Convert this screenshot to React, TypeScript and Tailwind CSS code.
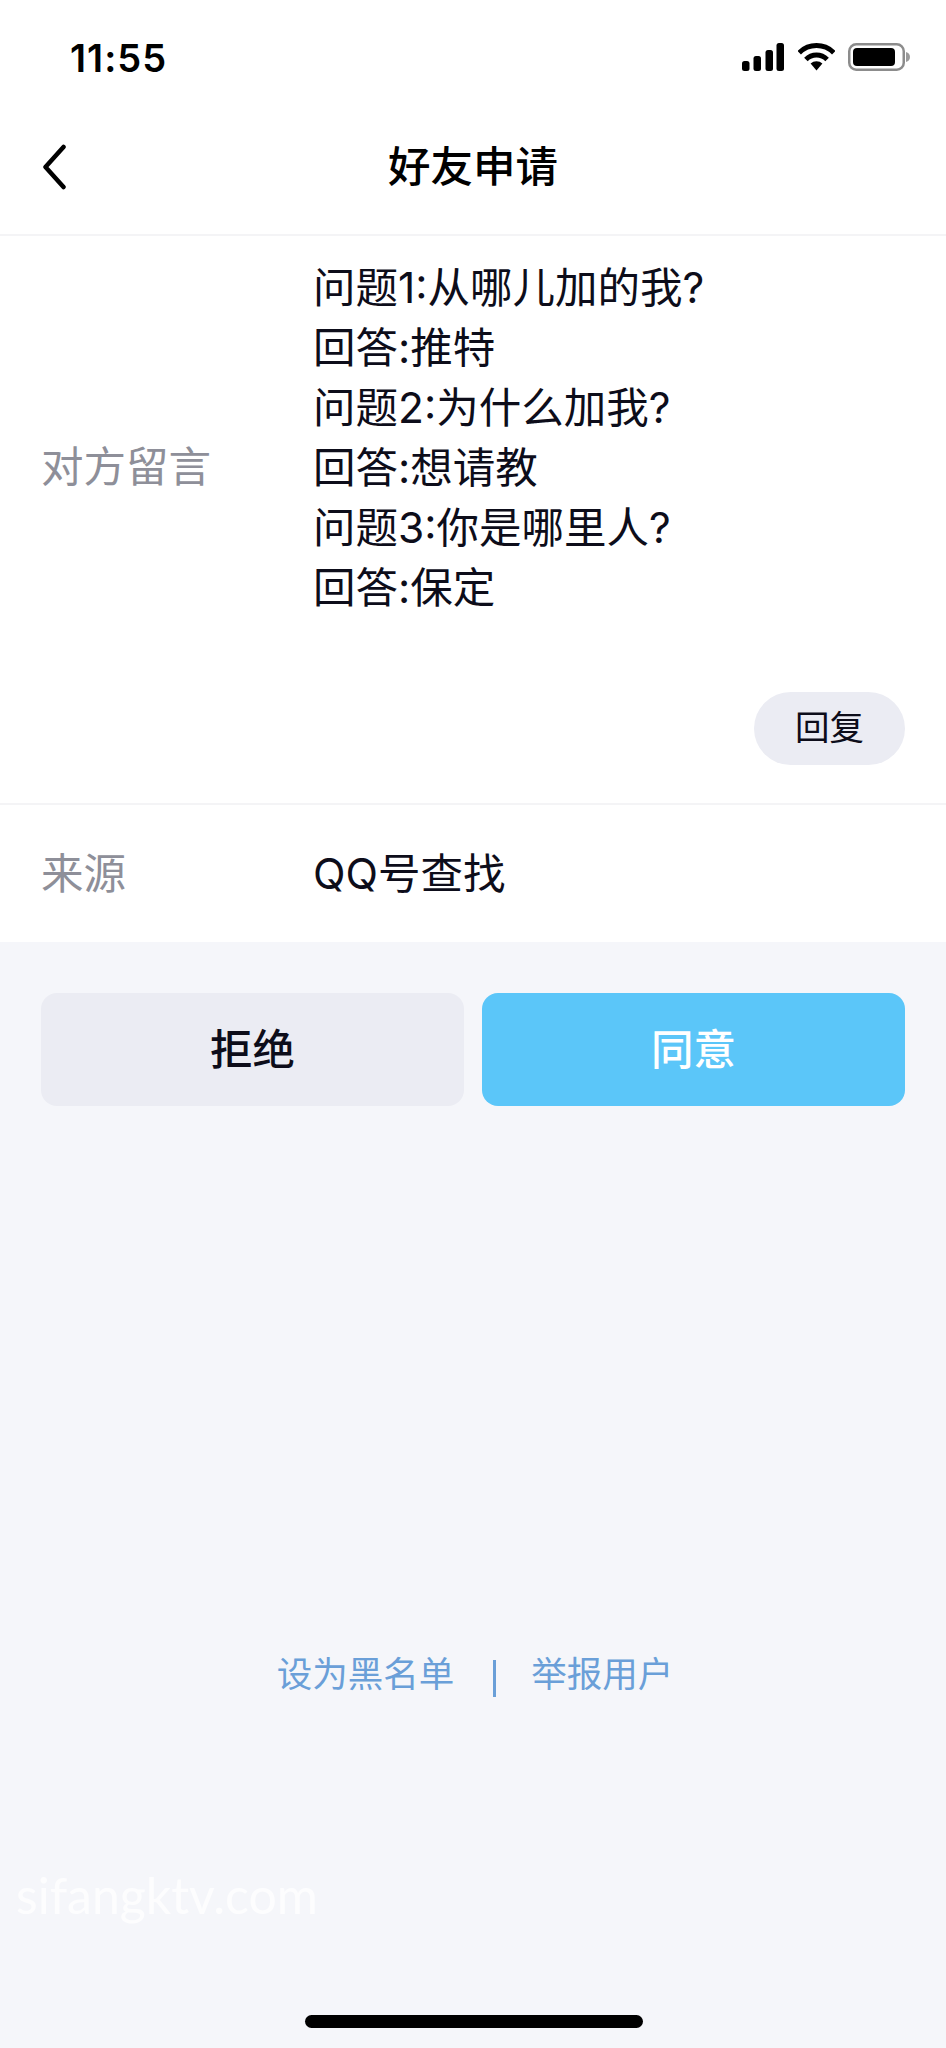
const FONT = "font-['Inter','Noto_Sans_CJK_SC',sans-serif]";

const messageLines = [
  "问题1:从哪儿加的我?",
  "回答:推特",
  "问题2:为什么加我?",
  "回答:想请教",
  "问题3:你是哪里人?",
  "回答:保定",
];

const StatusIcons = (): JSX.Element => (
  <div className="flex items-center">
    {/* 信号 */}
    <svg width="42" height="28" viewBox="0 0 42 28" fill="#000">
      <rect x="0" y="18" width="7.5" height="10" rx="2.5" />
      <rect x="11.5" y="13" width="7.5" height="15" rx="2.5" />
      <rect x="23.5" y="7" width="7.5" height="21" rx="2.5" />
      <rect x="34.5" y="0" width="7.5" height="28" rx="2.5" />
    </svg>
    {/* wifi */}
    <svg className="ml-[14px]" width="37" height="28" viewBox="0 0 37 28" fill="none" stroke="#000" strokeWidth="5">
      <path d="M1.2 9.7 A24.5 24.5 0 0 1 35.8 9.7" />
      <path d="M7.9 16.4 A15 15 0 0 1 29.1 16.4" />
      <path d="M12.6 20.6 A8.5 8.5 0 0 1 24.4 20.6 L18.5 27.5 Z" fill="#000" stroke="none" />
    </svg>
    {/* 电池 */}
    <svg className="ml-[13px]" width="62" height="28" viewBox="0 0 62 28" fill="none">
      <rect x="1.25" y="1.25" width="54.5" height="25.5" rx="7" stroke="#8c8c8c" strokeWidth="2.5" />
      <rect x="5" y="5" width="42" height="18" rx="4" fill="#000" />
      <path d="M58 9 C60.5 9.5 62 11.5 62 14 C62 16.5 60.5 18.5 58 19 Z" fill="#9a9a9a" />
    </svg>
  </div>
);

const App = (): JSX.Element => {
  return (
    <div className={`${FONT} relative flex h-[2048px] w-[946px] flex-col overflow-hidden bg-[#f5f6fa] text-[#0d0d1a]`}>
      {/* 状态栏 */}
      <div className="flex h-[116px] items-start justify-between bg-white pl-[70px] pr-[36px] pt-[43px]">
        <span className="text-[38px] leading-[30px] font-semibold tracking-[1px] text-black">11:55</span>
        <StatusIcons />
      </div>

      {/* 导航栏 */}
      <div className="relative flex h-[120px] items-center justify-center border-b-2 border-[#f4f4f6] bg-white pb-[16px]">
        <svg className="absolute left-[42px] top-[28px]" width="24" height="46" viewBox="0 0 24 46" fill="none">
          <path d="M21.5 3 L3.5 23 L21.5 43" stroke="#000" strokeWidth="4.5" strokeLinecap="round" strokeLinejoin="round" />
        </svg>
        <h1 className="text-[42.5px] leading-none font-medium text-black">好友申请</h1>
      </div>

      {/* 对方留言 */}
      <div className="flex flex-col border-b-2 border-[#f4f4f6] bg-white px-[41px] pt-[22px]">
        <div className="flex items-center">
          <div className="w-[272px] text-[42.5px] leading-[60px] text-[#8e8f99]">对方留言</div>
          <div className="pb-[58px] text-[42.5px] leading-[60px]">
            {messageLines.map((line) => (
              <p key={line}>{line}</p>
            ))}
          </div>
        </div>
        <div className="mt-[16px] flex justify-end pb-[38px]">
          <button className="h-[73px] w-[151px] rounded-full bg-[#ebecf3] text-[34.5px] leading-none">回复</button>
        </div>
      </div>

      {/* 来源 */}
      <div className="flex h-[137px] items-center bg-white px-[41px]">
        <div className="w-[272px] text-[42.5px] text-[#8e8f99]">来源</div>
        <div className="text-[42.5px]">QQ号查找</div>
      </div>

      {/* 操作按钮 */}
      <div className="mt-[51px] flex gap-[18px] px-[41px]">
        <button className="h-[113px] flex-1 rounded-[16px] bg-[#ebecf3] text-[42.5px] font-medium">拒绝</button>
        <button className="h-[113px] flex-1 rounded-[16px] bg-[#5bc6f9] text-[42.5px] font-medium text-white">同意</button>
      </div>

      {/* 底部链接 */}
      <div className="mt-[546px] flex items-center justify-center pl-[4px] text-[35.5px] leading-[44px] text-[#6a9fd8]">
        <span>设为黑名单</span>
        <span className="ml-[39px] mr-[35px] mt-[8px] h-[37px] w-[3px] bg-[#6a9fd8]" />
        <span>举报用户</span>
      </div>

      {/* 水印 */}
      <div className="absolute left-[16px] top-[1864px] font-['Lato',sans-serif] text-[50px] leading-[62px] text-white/80">sifangktv.com</div>

      {/* Home 指示条 */}
      <div className="absolute bottom-[20px] left-[305px] h-[13px] w-[338px] rounded-full bg-black" />
    </div>
  );
};

export default App;
